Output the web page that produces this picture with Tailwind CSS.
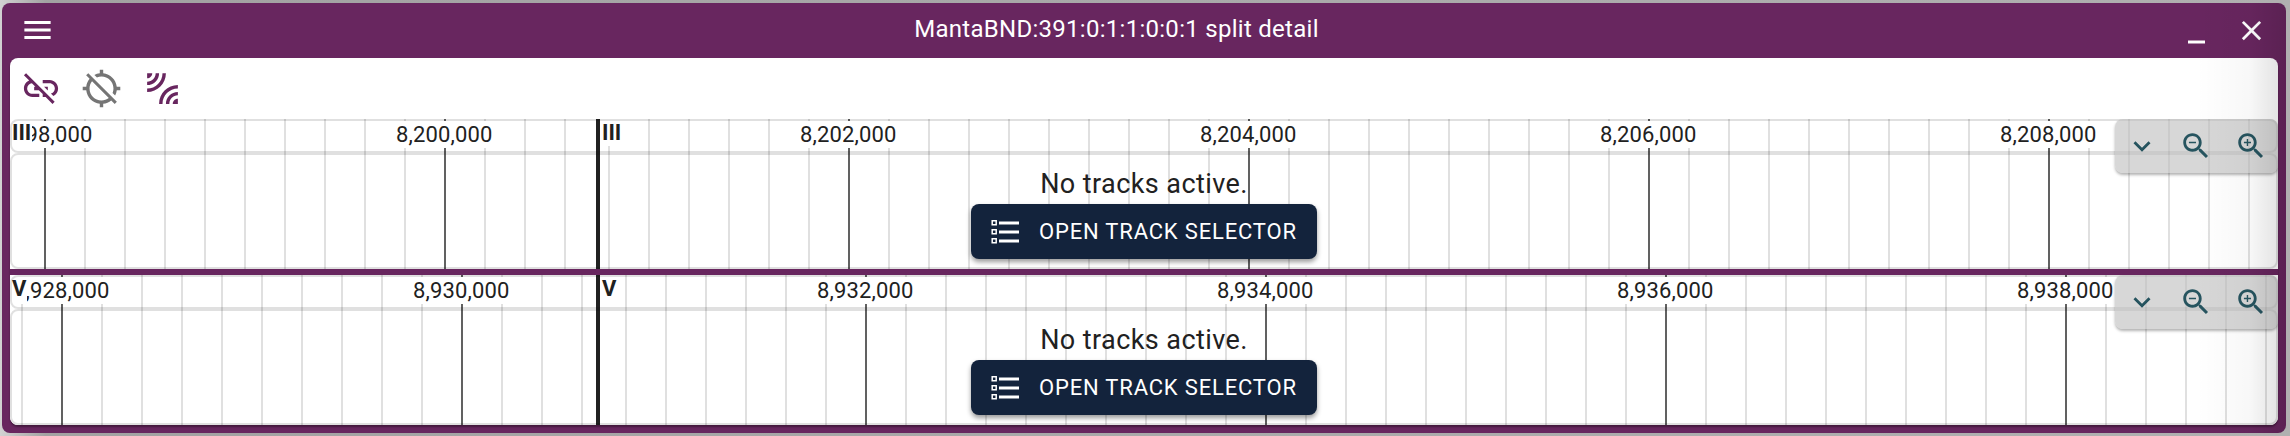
<!DOCTYPE html>
<html lang="en">
<head>
<meta charset="utf-8">
<title>Split detail</title>
<script src="https://cdn.jsdelivr.net/npm/@tailwindcss/browser@4"></script>
</head>
<body class="w-[2290px] h-[436px] overflow-hidden bg-[#a6a6a6] font-['Roboto',sans-serif] text-[#212121]">
<div class="relative w-[2290px] h-[436px] pt-[3px] pl-[2px] bg-linear-to-r from-[#d2d2d2] via-[#a2a2a2] via-[2%] to-[#b0b0b0]">
  <main class="w-[2284px] h-[430px] rounded-[8px] bg-[#68265f] px-2 flex flex-col">
    <header class="h-[55px] flex items-center text-white relative shrink-0">
      <svg class="w-[35px] h-[36px] ml-[10px] mb-px" viewBox="0 0 24 24" preserveAspectRatio="none" fill="currentColor"><path d="M3 18h18v-2H3v2zm0-5h18v-2H3v2zm0-7v2h18V6H3z"/></svg>
      <h1 class="absolute left-0 right-[55px] top-[9px] text-center text-[24px] leading-[34px] tracking-[0.28px]">MantaBND:391:0:1:1:0:0:1 split detail</h1>
      <svg class="w-[30px] h-[30px] ml-auto mr-[24px]" viewBox="0 0 30 30" fill="currentColor"><path d="M7 24.500h17v3H7z"/></svg>
      <svg class="w-[33px] h-[33px] mr-[10px] mb-px" viewBox="0 0 24 24" fill="currentColor"><path d="M19 6.410 17.590 5 12 10.590 6.410 5 5 6.410 10.590 12 5 17.590 6.410 19 12 13.410 17.590 19 19 17.590 13.410 12z"/></svg>
    </header>
    <section class="h-[367px] bg-white rounded-[8px] overflow-hidden shadow-[0_2px_2px_rgba(0,0,0,.35)]">
      <div class="h-[61px] flex items-center text-[#68265f]">
        <svg class="w-[42px] h-[41px] ml-[10px]" viewBox="0 0 24 24" fill="currentColor"><path d="M17 7h-4v1.900h4c1.710 0 3.100 1.390 3.100 3.100 0 1.430-.98 2.630-2.310 2.980l1.460 1.460C20.880 15.610 22 13.950 22 12c0-2.760-2.240-5-5-5zm-1 4h-2.190l2 2H16zM2 4.270l3.110 3.110C3.290 8.120 2 9.910 2 12c0 2.760 2.240 5 5 5h4v-1.900H7c-1.710 0-3.100-1.390-3.100-3.100 0-1.590 1.210-2.900 2.760-3.070L8.730 11H8v2h2.730L13 15.270V17h1.730l4.010 4L20 19.740 3.270 3 2 4.270z"/></svg>
        <svg class="w-[41px] h-[41px] ml-[19px] text-[#757575]" viewBox="0 0 24 24" fill="currentColor"><path d="M20.940 11c-.46-4.170-3.770-7.480-7.940-7.940V1h-2v2.060c-1.130.12-2.190.46-3.160.97l1.500 1.500C10.160 5.190 11.060 5 12 5c3.870 0 7 3.130 7 7 0 .94-.19 1.840-.52 2.650l1.500 1.500c.5-.96.840-2.020.97-3.150H23v-2h-2.060zM3 4.270l2.040 2.040C3.970 7.620 3.250 9.230 3.060 11H1v2h2.060c.46 4.170 3.770 7.480 7.940 7.940V23h2v-2.060c1.770-.2 3.380-.91 4.690-1.980L19.730 21 21 19.730 4.270 3 3 4.270zm13.270 13.270C15.090 18.450 13.610 19 12 19c-3.870 0-7-3.130-7-7 0-1.610.55-3.090 1.460-4.270l9.810 9.810z"/></svg>
        <svg class="w-[41px] h-[41px] ml-[20px]" viewBox="0 0 24 24" fill="currentColor"><path d="M10 3c0 3.870-3.130 7-7 7V8c2.760 0 5-2.240 5-5h2zm4 0c0 6.080-4.920 11-11 11v-2c4.970 0 9-4.030 9-9h2zM6 3c0 1.660-1.340 3-3 3V3h3zm4 18c0-6.080 4.920-11 11-11v2c-4.970 0-9 4.030-9 9h-2zm8 0c0-1.660 1.340-3 3-3v3h-3zm-4 0c0-3.870 3.130-7 7-7v2c-2.760 0-5 2.240-5 5h-2z"/></svg>
      </div>
      <div id="views"></div>
    </section>
  </main>
  <div class="absolute right-[4px] top-[3px] w-[90px] h-[430px] rounded-r-[8px] bg-linear-to-r from-transparent via-black/3 via-60% to-black/13"></div>
</div>
<template id="view">
  <article class="h-[150px] relative overflow-hidden bg-white">
    <div class="ticks absolute inset-0"></div>
    <div class="absolute inset-0 flex flex-col">
      <div class="h-[34px] rounded-[8px] border-2 border-black/12"></div>
      <div class="grow rounded-[8px] border-2 border-black/12"></div>
    </div>
    <div class="absolute inset-0 flex flex-col items-center pt-[45px]">
      <p class="text-[27px] leading-[40px] tracking-[0.42px]">No tracks active.</p>
      <button class="w-[346px] h-[55px] rounded-[8px] bg-[#13233c] text-white flex items-center shadow-[0_3px_5px_rgba(0,0,0,.4)] shrink-0">
        <svg class="w-9 h-9 ml-[16px] mr-[16px] shrink-0" viewBox="0 0 36 36"><g fill="none" stroke="currentColor" stroke-width="1.500"><path d="M5.200 6.700h4v4h-4zM5.200 15.700h4v4h-4zM5.200 24.700h4v4h-4z"/></g><path fill="currentColor" d="M12 7.500h20v3H12zM12 16.500h20v3H12zM12 25.500h20v3H12z"/></svg>
        <span class="text-[22px] leading-[26px] tracking-[0.82px] whitespace-nowrap">OPEN TRACK SELECTOR</span>
      </button>
    </div>
    <div class="absolute right-0 top-0 w-[163px] h-[54px] rounded-[8px] bg-[#bdbdbd]/60 shadow-[0_2px_3px_rgba(0,0,0,.3)] text-[#26545f] flex items-center">
      <svg class="w-[34px] h-[34px] ml-[10px]" viewBox="0 0 24 24" fill="currentColor"><path d="M7.410 8.590 12 13.170l4.590-4.580L18 10l-6 6-6-6z"/></svg>
      <svg class="w-[34px] h-[34px] ml-[20px]" viewBox="0 0 24 24" fill="currentColor"><path d="M15.500 14h-.79l-.28-.27C15.410 12.590 16 11.110 16 9.500 16 5.910 13.090 3 9.500 3S3 5.910 3 9.500 5.910 16 9.500 16c1.610 0 3.090-.59 4.230-1.570l.27.28v.79l5 4.990L20.490 19l-4.990-5zm-6 0C7.010 14 5 11.990 5 9.500S7.010 5 9.500 5 14 7.010 14 9.500 11.990 14 9.500 14zM7 9h5v1H7z"/></svg>
      <svg class="w-[34px] h-[34px] ml-[21px]" viewBox="0 0 24 24" fill="currentColor"><path d="M15.500 14h-.79l-.28-.27C15.410 12.590 16 11.110 16 9.500 16 5.910 13.090 3 9.500 3S3 5.910 3 9.500 5.910 16 9.500 16c1.610 0 3.090-.59 4.230-1.570l.27.28v.79l5 4.990L20.490 19l-4.990-5zm-6 0C7.010 14 5 11.990 5 9.500S7.010 5 9.500 5 14 7.010 14 9.500 11.990 14 9.500 14zm2.500-4h-2v2H9v-2H7V9h2V7h1v2h2v1z"/></svg>
    </div>
  </article>
</template>
<script>
const views = [
  {ref: 'III', left: 34, right: 598, labels: ['8,198,000','8,200,000','8,202,000','8,204,000','8,206,000','8,208,000']},
  {ref: 'V', left: 51, right: 615, labels: ['8,928,000','8,930,000','8,932,000','8,934,000','8,936,000','8,938,000']}
];
const host = document.getElementById('views');
views.forEach((v, n) => {
  const node = document.getElementById('view').content.cloneNode(true);
  const major = [v.left, v.left + 400, v.right + 240, v.right + 640, v.right + 1040, v.right + 1440];
  let h = '';
  const tick = x => {
    h += `<i class="absolute inset-y-0 w-[2px] ${major.includes(x) ? 'bg-[#616161]' : 'bg-[#e0e0e0]'}" style="left:${x}px"></i>`;
  };
  for (let x = v.left - 40; x < 586; x += 40) if (x >= 0) tick(x);
  for (let x = v.right; x < 2268; x += 40) tick(x);
  major.forEach((x, i) => {
    h += `<span class="absolute top-[2px] h-[27px] w-[96px] bg-white text-center text-[22px] leading-[27px] tracking-[0.15px]" style="left:${x - 48}px">${v.labels[i]}</span>`;
  });
  h += '<i class="absolute inset-y-0 left-[586px] w-[4px] bg-[#212121]"></i>';
  [0, 590].forEach(x => {
    h += `<b class="absolute top-0 h-[27px] pl-[2px] pr-px bg-white text-[22px] leading-[27px] font-bold" style="left:${x}px">${v.ref}</b>`;
  });
  node.querySelector('.ticks').innerHTML = h;
  if (n) {
    const bar = document.createElement('div');
    bar.className = 'h-[6px] bg-[#68265f]';
    host.append(bar);
  }
  host.append(node);
});
</script>
</body>
</html>
